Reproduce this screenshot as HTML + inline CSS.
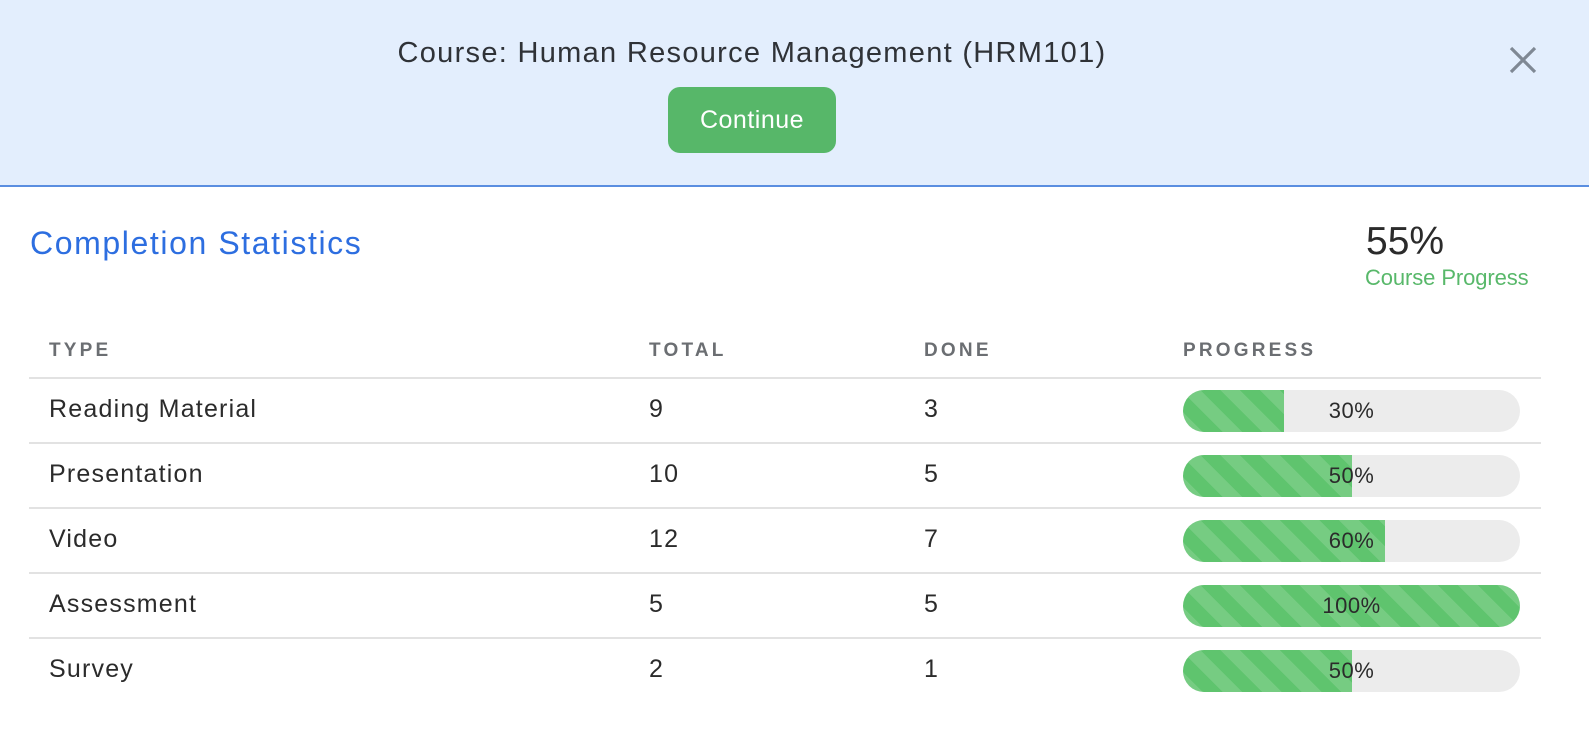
<!DOCTYPE html>
<html><head><style>
body{margin:0;width:1589px;height:729px;background:#fff;font-family:"Liberation Sans",sans-serif;position:relative;overflow:hidden;color:#2b2b2b}
.top{position:absolute;left:0;top:0;width:1589px;height:185px;background:#e3eefd;border-bottom:2px solid #5a8ee0}
.t{position:absolute;left:0;width:1504px;text-align:center;top:37px;font-size:29px;letter-spacing:1.3px;color:#2f3237}
.btn{position:absolute;left:668px;top:87px;width:168px;height:66px;border-radius:12px;background:#57b769;color:#fff;font-size:25px;letter-spacing:0.5px;line-height:66px;text-align:center}
.x{position:absolute;left:1505px;top:42px}
.cs{position:absolute;left:30px;top:225px;font-size:32px;letter-spacing:1.6px;color:#2d6ee0}
.pc{position:absolute;left:1366px;top:220px;font-size:39px;color:#2b2b2b;letter-spacing:0px}
.cp{position:absolute;left:1365px;top:265px;font-size:22px;color:#58b86a;letter-spacing:-0.1px}
.h{position:absolute;top:340px;font-size:19px;font-weight:bold;color:#6b6e72;letter-spacing:3.2px}
.line{position:absolute;left:29px;width:1512px;height:2px;background:#e2e2e2}
.c{position:absolute;font-size:25px;letter-spacing:1.2px;color:#2b2b2b}
.bar{position:absolute;left:1183px;width:337px;height:42px;border-radius:21px;background:#ececec;overflow:hidden}
.fill{position:absolute;left:0;top:0;height:42px;background:#5fc46e;background-image:repeating-linear-gradient(45deg,rgba(255,255,255,.14) 0 14px,transparent 14px 28px)}
.bl{position:absolute;left:0;width:337px;top:0;line-height:42px;text-align:center;font-size:22px;letter-spacing:0.5px;color:#2b2b2b}
</style></head><body>
<div class="top">
<div class="t">Course: Human Resource Management (HRM101)</div>
<div class="btn">Continue</div>
<svg class="x" width="36" height="36" viewBox="0 0 36 36"><path d="M6 6L30 30M30 6L6 30" stroke="#7f8894" stroke-width="3.2" fill="none"/></svg>
</div>
<div class="cs">Completion Statistics</div>
<div class="pc">55%</div>
<div class="cp">Course Progress</div>
<div class="h" style="left:49px">TYPE</div>
<div class="h" style="left:649px">TOTAL</div>
<div class="h" style="left:924px">DONE</div>
<div class="h" style="left:1183px">PROGRESS</div>
<div class="line" style="top:377px"></div>
<div class="line" style="top:442px"></div>
<div class="line" style="top:507px"></div>
<div class="line" style="top:572px"></div>
<div class="line" style="top:637px"></div>

<div class="c" style="left:49px;top:395px">Reading Material</div><div class="c" style="left:649px;top:395px">9</div><div class="c" style="left:924px;top:395px">3</div>
<div class="bar" style="top:390px"><div class="fill" style="width:101px"></div><div class="bl">30%</div></div>

<div class="c" style="left:49px;top:460px">Presentation</div><div class="c" style="left:649px;top:460px">10</div><div class="c" style="left:924px;top:460px">5</div>
<div class="bar" style="top:455px"><div class="fill" style="width:169px"></div><div class="bl">50%</div></div>

<div class="c" style="left:49px;top:525px">Video</div><div class="c" style="left:649px;top:525px">12</div><div class="c" style="left:924px;top:525px">7</div>
<div class="bar" style="top:520px"><div class="fill" style="width:202px"></div><div class="bl">60%</div></div>

<div class="c" style="left:49px;top:590px">Assessment</div><div class="c" style="left:649px;top:590px">5</div><div class="c" style="left:924px;top:590px">5</div>
<div class="bar" style="top:585px"><div class="fill" style="width:337px"></div><div class="bl">100%</div></div>

<div class="c" style="left:49px;top:655px">Survey</div><div class="c" style="left:649px;top:655px">2</div><div class="c" style="left:924px;top:655px">1</div>
<div class="bar" style="top:650px"><div class="fill" style="width:169px"></div><div class="bl">50%</div></div>
</body></html>
